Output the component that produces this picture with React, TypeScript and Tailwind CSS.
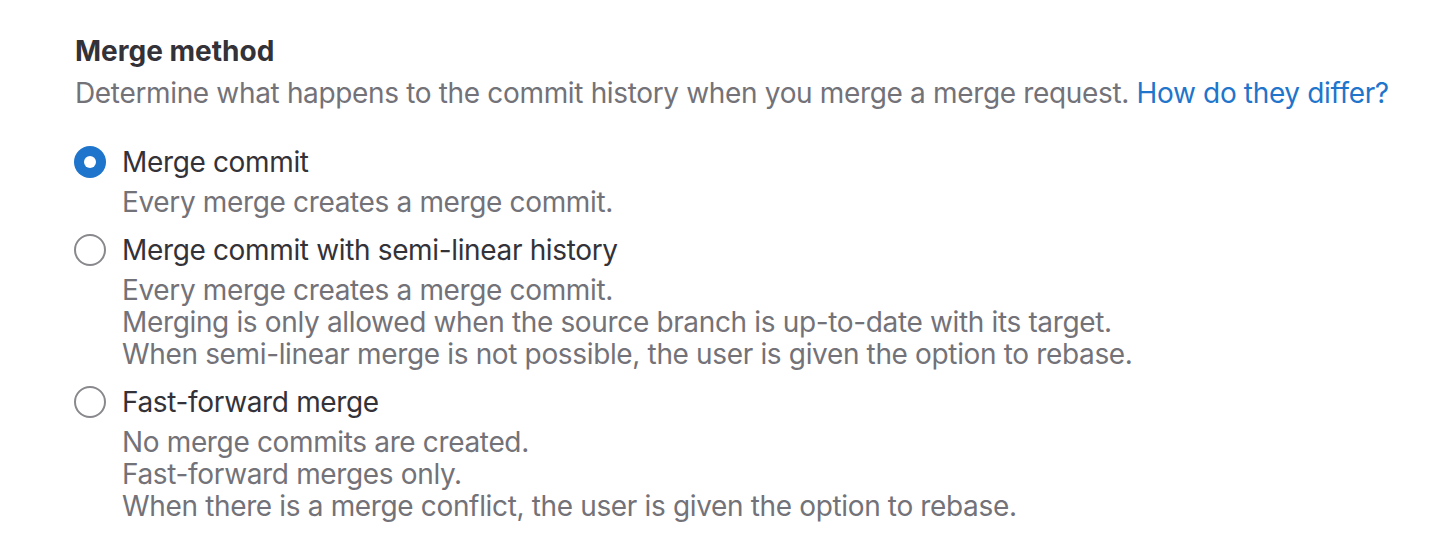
const options = [
  {
    label: 'Merge commit',
    help: ['Every merge creates a merge commit.'],
    checked: true,
  },
  {
    label: 'Merge commit with semi-linear history',
    help: [
      'Every merge creates a merge commit.',
      'Merging is only allowed when the source branch is up-to-date with its target.',
      'When semi-linear merge is not possible, the user is given the option to rebase.',
    ],
    checked: false,
  },
  {
    label: 'Fast-forward merge',
    help: [
      'No merge commits are created.',
      'Fast-forward merges only.',
      'When there is a merge conflict, the user is given the option to rebase.',
    ],
    checked: false,
  },
]

export default function App() {
  return (
    <div className="min-h-[550px] bg-white font-['Inter',sans-serif] text-[#333238]">
      <div className="pl-[75px] pt-[33px]">
        <h2 className="text-[28px] font-bold leading-[36px]">Merge method</h2>
        <p className="mt-[8px] text-[28px] leading-[32px] tracking-[-0.34px] text-[#737278]">
          Determine what happens to the commit history when you merge a merge request.{' '}
          <a href="#" className="text-[#1f75cb]">How do they differ?</a>
        </p>

        <div className="mt-[33px] flex flex-col gap-[12px]">
          {options.map((o) => (
            <label key={o.label} className="flex gap-[16px] -ml-px">
              <span className="flex h-[40px] items-center">
                {o.checked ? (
                  <span className="flex h-[32px] w-[32px] items-center justify-center rounded-full bg-[#1f75cb]">
                    <span className="h-[12px] w-[12px] rounded-full bg-white" />
                  </span>
                ) : (
                  <span className="h-[32px] w-[32px] rounded-full border-2 border-[#89888d] bg-white" />
                )}
              </span>
              <span className="flex flex-col tracking-[-0.35px]">
                <span className="text-[28px] leading-[40px]">{o.label}</span>
                <span className="mt-[4px] flex flex-col text-[28px] leading-[32px] text-[#737278]">
                  {o.help.map((h) => (
                    <span key={h}>{h}</span>
                  ))}
                </span>
              </span>
            </label>
          ))}
        </div>
      </div>
    </div>
  )
}
